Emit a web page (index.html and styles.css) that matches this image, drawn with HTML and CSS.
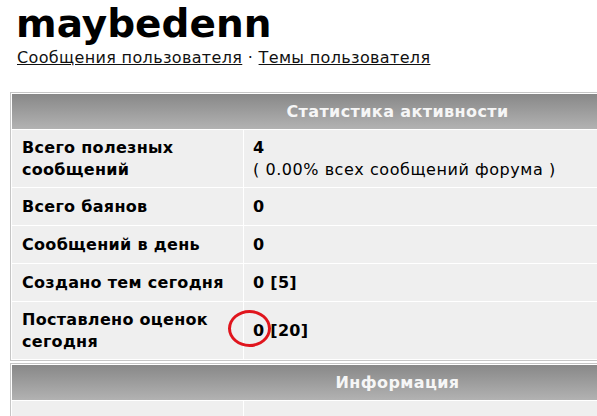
FILE: index.html
```html
<!DOCTYPE html>
<html lang="ru">
<head>
<meta charset="utf-8">
<title>maybedenn</title>
<link rel="stylesheet" href="styles.css">
</head>
<body>
<div class="page">
  <h1 class="username">maybedenn</h1>
  <div class="user-links">
    <a href="#">Сообщения пользователя</a> · <a href="#">Темы пользователя</a>
  </div>

  <table class="stats">
    <tr><th colspan="2">Статистика активности</th></tr>
    <tr class="row-tall">
      <td class="label">Всего полезных<br>сообщений</td>
      <td class="value"><b>4</b><br><span class="note">( 0.00% всех сообщений форума )</span></td>
    </tr>
    <tr class="row"><td class="label">Всего баянов</td><td class="value"><b>0</b></td></tr>
    <tr class="row"><td class="label">Сообщений в день</td><td class="value"><b>0</b></td></tr>
    <tr class="row"><td class="label">Создано тем сегодня</td><td class="value"><b>0 [5]</b></td></tr>
    <tr class="row-tall">
      <td class="label">Поставлено оценок<br>сегодня</td>
      <td class="value marked"><b>0 [20]</b><span class="circle"></span></td>
    </tr>
  </table>

  <table class="stats second">
    <tr><th colspan="2">Информация</th></tr>
    <tr class="row"><td class="label">&nbsp;</td><td class="value">&nbsp;</td></tr>
  </table>
</div>
</body>
</html>
```

FILE: styles.css
```css
html, body {
  margin: 0;
  padding: 0;
  overflow: hidden;
  background: #ffffff;
}

body {
  font-family: "DejaVu Sans", Verdana, sans-serif;
  color: #000;
}

.page {
  padding: 0 10px;
}

.username {
  margin: 0;
  padding: 0 0 0 6px;
  font-size: 39px;
  line-height: 48px;
  font-weight: bold;
  color: #000;
}

.user-links {
  padding-left: 7px;
  font-size: 16px;
  line-height: 20px;
  letter-spacing: 0.35px;
  color: #111;
}

.user-links a {
  color: #111;
  text-decoration: underline;
}

.stats {
  margin-top: 24px;
  width: 775px;
  border: 1px solid #c6c6c6;
  border-spacing: 1px;
  background: #ffffff;
  font-size: 16px;
}

.stats.second {
  margin-top: 2px;
}

.stats th {
  height: 35px;
  padding: 0;
  background: linear-gradient(#888888, #b2b2b2);
  color: #f6f6f6;
  font-weight: bold;
  letter-spacing: 0.4px;
  text-align: center;
  vertical-align: middle;
}

.stats td {
  background: #efefef;
  vertical-align: middle;
  line-height: 22px;
  letter-spacing: 0.3px;
}

.stats .label {
  width: 211px;
  padding: 0 10px;
  font-weight: bold;
}

.stats .value {
  padding: 0 9px;
}

.row td {
  height: 37px;
}

.row-tall td {
  height: 57px;
}

.note {
  font-weight: normal;
  letter-spacing: 0.55px;
}

.marked {
  position: relative;
}

.circle {
  position: absolute;
  left: -16px;
  top: 8px;
  width: 37px;
  height: 31px;
  border: 3px solid #e0151d;
  border-radius: 50%;
}
```
